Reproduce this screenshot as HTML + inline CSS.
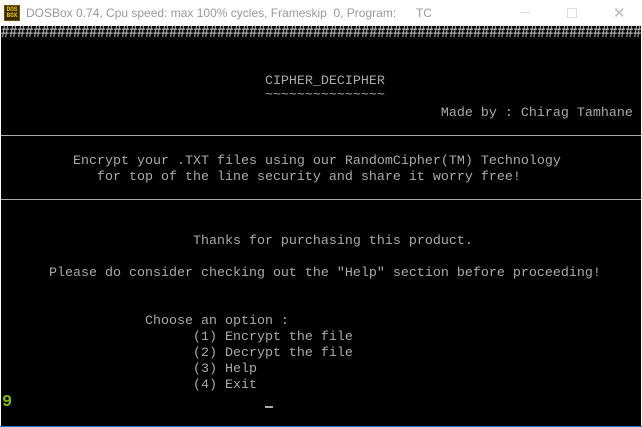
<!DOCTYPE html>
<html><head><meta charset="utf-8"><style>
html,body{margin:0;padding:0;width:642px;height:427px;overflow:hidden;background:#fff;}
#title{position:absolute;left:0;top:0;width:642px;height:26px;background:#fff;font-family:"Liberation Sans",sans-serif;font-size:12px;color:#999;}
#title .t{position:absolute;left:26px;top:6px;white-space:pre;}
#icon{position:absolute;left:4px;top:5px;width:16px;height:16px;background:#3a2a00;border:1px solid #6b5200;box-sizing:border-box;color:#f0c800;font:bold 6px/6px "Liberation Mono",monospace;text-align:center;padding-top:1px;}
#scr{position:absolute;left:1px;top:26px;width:640px;height:400px;background:#000;}
#bb{position:absolute;left:0;top:426px;width:642px;height:1px;background:#2b78b8;}
.r{position:absolute;left:0;white-space:pre;font-family:"Liberation Mono",monospace;font-size:13.33px;line-height:16px;height:16px;color:#aaa;}
.hl{position:absolute;left:0;width:640px;height:1px;background:#aaa;}
</style></head><body>
<div id="title"><div id="icon">DOS<br>BOX</div><span class="t">DOSBox 0.74, Cpu speed: max 100% cycles, Frameskip  0, Program:      TC</span>
<div style="position:absolute;left:567px;top:8px;width:10px;height:10px;border:1px solid #ddd;box-sizing:border-box"></div>
<div style="position:absolute;left:613px;top:4px;font:15px 'Liberation Sans',sans-serif;color:#bbb">✕</div>
<div style="position:absolute;left:520px;top:12px;width:10px;height:1px;background:#ddd"></div>
</div>
<div id="scr">
<div class="r" style="top:-1px;font-weight:bold;font-size:14px;letter-spacing:-0.4px;transform:scaleY(1.25);transform-origin:0 8px;color:#b0b0b0">################################################################################</div>
<div class="r" style="top:48px">                                 CIPHER_DECIPHER</div>
<div class="r" style="top:62px">                                 ~~~~~~~~~~~~~~~</div>
<div class="r" style="top:80px">                                                       Made by : Chirag Tamhane</div>
<div class="hl" style="top:109px"></div>
<div class="r" style="top:128px">         Encrypt your .TXT files using our RandomCipher(TM) Technology</div>
<div class="r" style="top:144px">            for top of the line security and share it worry free!</div>
<div class="hl" style="top:173px"></div>
<div class="r" style="top:208px">                        Thanks for purchasing this product.</div>
<div class="r" style="top:240px">      Please do consider checking out the "Help" section before proceeding!</div>
<div class="r" style="top:288px">                  Choose an option :</div>
<div class="r" style="top:304px">                        (1) Encrypt the file</div>
<div class="r" style="top:320px">                        (2) Decrypt the file</div>
<div class="r" style="top:336px">                        (3) Help</div>
<div class="r" style="top:352px">                        (4) Exit</div>
<div class="r" style="top:369px;color:#7fbf00;font-weight:bold;font-size:17px;left:1px">9</div>
<div style="position:absolute;left:264px;top:380px;width:8px;height:2px;background:#aaa"></div>
</div>
<div id="bb"></div>
</body></html>
